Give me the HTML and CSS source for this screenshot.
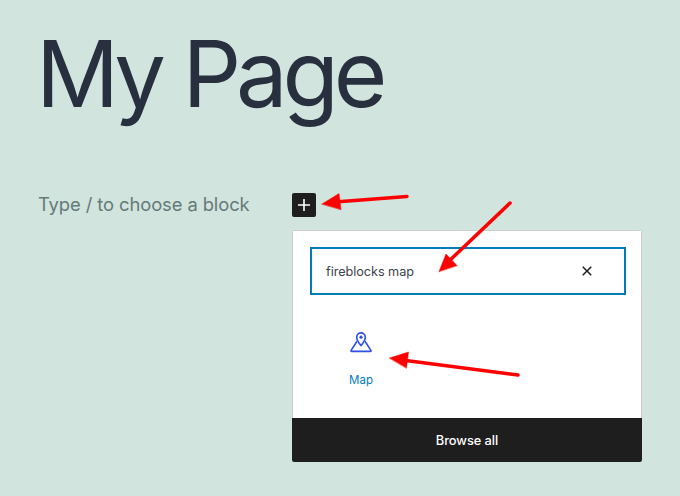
FILE: index.html
```html
<!DOCTYPE html>
<html lang="en">
<head>
<meta charset="utf-8">
<title>My Page</title>
<link rel="stylesheet" href="styles.css">
</head>
<body>
<main class="editor">
  <h1 class="title">My Page</h1>
  <div class="block-row">
    <p class="placeholder">Type / to choose a block</p>
    <button class="add-btn" aria-label="Add block">
      <svg width="24" height="24" viewBox="0 0 24 24"><path d="M18 11.2h-5.2V6h-1.6v5.2H6v1.6h5.2V18h1.6v-5.2H18z" fill="#fff"/></svg>
    </button>
  </div>
  <section class="inserter">
    <div class="inserter-body">
      <div class="search">
        <span class="search-text">fireblocks map</span>
        <svg class="search-clear" width="24" height="24" viewBox="0 0 24 24"><path d="M12 13.06l3.71 3.71 1.06-1.06L13.06 12l3.71-3.71-1.06-1.06L12 10.94 8.29 7.23 7.23 8.29 10.94 12l-3.71 3.71 1.06 1.06z" fill="#1e1e1e"/></svg>
      </div>
      <div class="results">
        <div class="result">
          <svg class="result-icon" width="24" height="24" viewBox="0 0 24 24" fill="none" stroke="#2f4fe8" stroke-width="1.6" stroke-linejoin="round">
            <path d="M12 15.6c-2.500-3-4.300-6-4.300-8.400a4.300 4.300 0 0 1 8.600 0c0 2.400-1.800 5.400-4.300 8.400z"/>
            <circle cx="12" cy="7.200" r="1.600" fill="#2f4fe8" stroke="none"/>
            <path d="M8 11.200L2.100 20.400q-.5 1 .6 1h18.600q1.100 0 .6-1L16 11.200"/>
          </svg>
          <span class="result-label">Map</span>
        </div>
      </div>
    </div>
    <div class="browse">Browse all</div>
  </section>
</main>
<svg class="arrows" width="680" height="496" viewBox="0 0 680 496">
  <g fill="#fe0000" stroke="#fe0000" stroke-linecap="round">
    <path d="M407 196.500L335 202" stroke-width="3.500" fill="none"/>
    <path d="M322 204L339 193.500L341 209.500z" stroke-width="0.500"/>
    <path d="M510 203L447 263" stroke-width="3.500" fill="none"/>
    <path d="M439 271.500L446 254L457 265.500z" stroke-width="0.500"/>
    <path d="M518 375L402 360" stroke-width="3.500" fill="none"/>
    <path d="M389.500 358L408.500 352L406.500 368z" stroke-width="0.500"/>
  </g>
</svg>
</body>
</html>
```

FILE: styles.css
```css
* { box-sizing: border-box; }
html, body { margin: 0; height: 100%; }
body {
  background: #d2e4de;
  font-family: Inter, "Liberation Sans", sans-serif;
  overflow: hidden;
  position: relative;
}
.editor { padding: 0 38px; }
.title {
  margin: 0 0 0 -2px;
  padding-top: 21px;
  font-size: 92px;
  line-height: 106px;
  font-weight: 400;
  color: #28303f;
  letter-spacing: -5.200px;
  word-spacing: 1px;
}
.block-row {
  display: flex;
  align-items: center;
  margin-top: 66px;
  height: 24px;
}
.placeholder {
  margin: -2px 0 0;
  width: 254px;
  font-size: 18.400px;
  line-height: 24px;
  letter-spacing: -0.1px;
  color: #667a78;
}
.add-btn {
  width: 24px;
  height: 24px;
  padding: 0;
  border: 0;
  border-radius: 2px;
  background: #1e1e1e;
  display: flex;
}
.inserter {
  margin: 13px 0 0 254px;
  width: 350px;
  height: 232px;
  background: #fff;
  border-radius: 2px;
  display: flex;
  flex-direction: column;
  overflow: hidden;
}
.inserter-body {
  flex: 1;
  padding: 16px 15px 0 17px;
  border: 1px solid #ccc;
  border-bottom: 0;
}
.search {
  height: 48px;
  border: 2px solid #007cba;
  display: flex;
  align-items: center;
  justify-content: space-between;
  padding: 0 25px 0 14px;
}
.search-text { font-size: 12.700px; letter-spacing: -0.050px; color: #3c434a; }
.search-clear { flex: none; }
.results { padding: 35px 0 0 18px; }
.result {
  width: 66px;
  display: flex;
  flex-direction: column;
  align-items: center;
  gap: 19px;
}
.result-label { font-size: 11.500px; line-height: 14px; color: #007cba; }
.browse {
  height: 44px;
  background: #1e1e1e;
  color: #fff;
  font-size: 12.800px;
  font-weight: 500;
  letter-spacing: -0.050px;
  display: flex;
  align-items: center;
  justify-content: center;
}
.arrows { position: absolute; left: 0; top: 0; pointer-events: none; }
```
